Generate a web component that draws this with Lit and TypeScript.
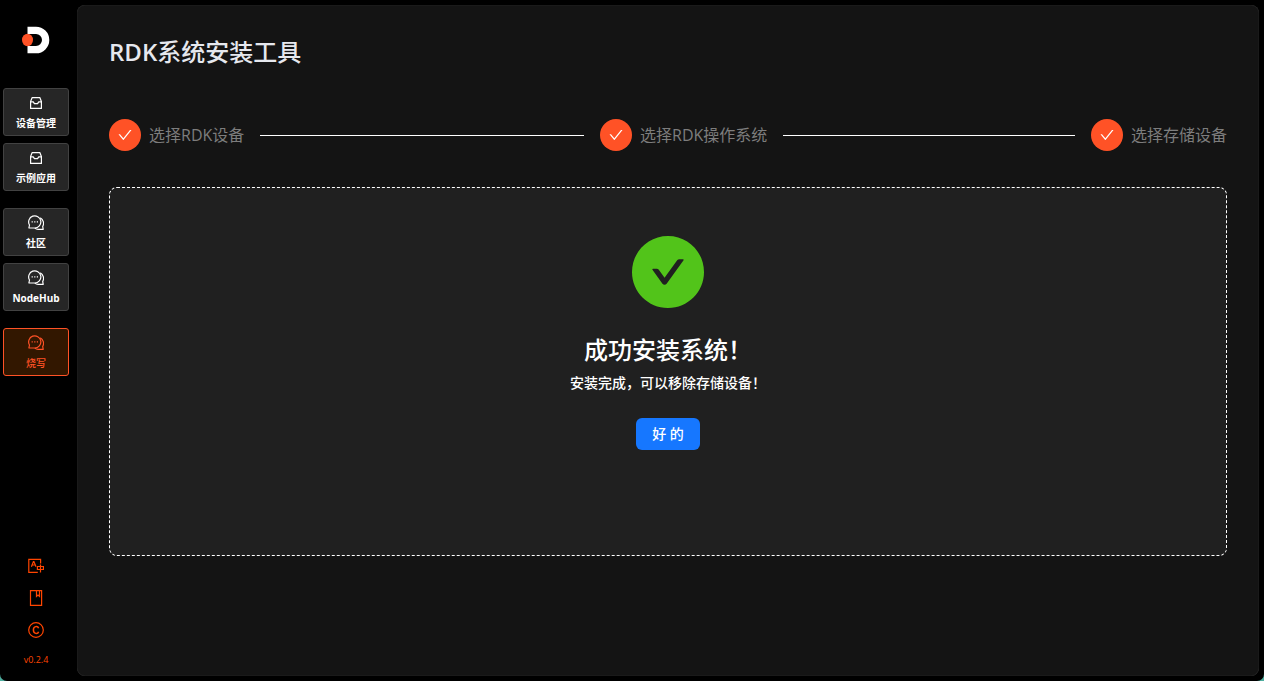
import { LitElement, html, css, svg, nothing } from "lit";
import { customElement } from "lit/decorators.js";
import { classMap } from "lit/directives/class-map.js";

const inboxIcon = html`<svg class="icon" viewBox="0 0 16 16" fill="none" stroke="currentColor" stroke-width="1.2" stroke-linejoin="round" aria-hidden="true">
  <path d="M2.6 6.4 L4.2 2.6 H11.8 L13.4 6.4 V13.4 H2.6 Z" />
  <path d="M2.6 6.9 H5.3 L6.4 8.6 H9.6 L10.7 6.9 H13.4" />
</svg>`;

const chatIcon = html`<svg class="icon" viewBox="0 0 16 16" fill="none" stroke="currentColor" stroke-width="1.2" stroke-linejoin="round" aria-hidden="true">
  <path d="M6.6 13 A6.1 6.1 0 1 0 1.5 10 L0.9 13 Z" />
  <path d="M12.2 2.9 A6.1 6.1 0 0 1 14.7 11.4 L15.2 14.4 H10.4 C9 14.5 7.8 14 6.8 13.1" />
  <path d="M3.6 6.9 h1.2 M6.2 6.9 h1.2 M8.8 6.9 h1.2" />
</svg>`;

const checkIcon = html`<svg class="check" viewBox="64 64 896 896" fill="currentColor" aria-hidden="true">
  <path d="M912 190h-69.9c-9.8 0-19.1 4.5-25.1 12.2L404.7 724.5 207 474a32 32 0 00-25.1-12.2H112c-6.7 0-10.4 7.7-6.3 12.9l273.9 347c12.8 16.2 37.4 16.2 50.3 0l488.4-618.9c4.1-5.1.4-12.8-6.3-12.8z" />
</svg>`;

const groups = [
  [
    { label: "设备管理", icon: inboxIcon, active: false },
    { label: "示例应用", icon: inboxIcon, active: false },
  ],
  [
    { label: "社区", icon: chatIcon, active: false },
    { label: "NodeHub", icon: chatIcon, active: false },
  ],
  [{ label: "烧写", icon: chatIcon, active: true }],
];

const tools = [
  {
    label: "切换语言",
    shape: svg`<path d="M12.6 5.4 V1.4 H0.8 V14.4 H9.8" /><path d="M3.4 8.8 L5.4 3.6 H5.9 L8 8.8 M4.2 7 H7.2" /><path d="M9.4 8.5 H15.4 V11.5 H9.4 Z M12.5 6.6 V14.6" />`,
  },
  {
    label: "文档",
    shape: svg`<path d="M2.5 0.6 H13.6 V15.4 H2.5 Z M8.5 0.6 V6.4 L10 5 L11.5 6.4 V0.6" />`,
  },
  {
    label: "版权",
    shape: svg`<circle cx="8" cy="8" r="7.3" /><path stroke-width="1.5" d="M10.6 6.3 C9.8 3.7 5.4 3.9 5.4 8 C5.4 12.1 9.8 12.3 10.6 9.7" />`,
  },
];

@customElement("app-sidebar")
export class AppSidebar extends LitElement {
  static styles = css`
    :host {
      display: flex;
      flex-direction: column;
      align-items: center;
      box-sizing: border-box;
      width: 72px;
      flex: none;
      padding: 26px 3px 14px;
    }
    .logo {
      display: block;
      width: 28px;
      height: 28px;
    }
    .menu {
      display: flex;
      flex-direction: column;
      gap: 17px;
      align-self: stretch;
      margin-top: 34px;
    }
    .group {
      display: flex;
      flex-direction: column;
      gap: 7px;
    }
    .item {
      display: flex;
      flex-direction: column;
      align-items: center;
      justify-content: center;
      gap: 4px;
      height: 48px;
      padding: 2px 0 0;
      border: 1px solid #424242;
      border-radius: 3px;
      background: #262626;
      color: #fff;
      font: 700 10px/16px var(--font);
      cursor: pointer;
    }
    .item.active {
      border-color: #ff5226;
      background: #321700;
      color: #ff5226;
      font-weight: 500;
    }
    .icon {
      display: block;
      width: 16px;
      height: 16px;
    }
    .tools {
      display: flex;
      flex-direction: column;
      gap: 16px;
      margin-top: auto;
    }
    .tool {
      display: block;
      padding: 0;
      border: 0;
      background: none;
      color: #ff4500;
      cursor: pointer;
    }
    .version {
      margin-top: 15px;
      color: #ff4500;
      font: 9px/14px var(--font);
    }
  `;

  render() {
    return html`
      <svg class="logo" viewBox="0 0 28 28" role="img" aria-label="D-Robotics">
        <path fill="#fff" d="M5.5 0.7 H14 A13.3 13.3 0 0 1 14 27.3 H5.5 V20 H14 A6 6 0 0 0 14 8 H5.5 Z" />
        <ellipse cx="5.5" cy="14" rx="5.5" ry="6.2" fill="#ff5226" />
      </svg>
      <nav class="menu">
        ${groups.map(
          (group) => html`<div class="group">
            ${group.map(
              (item) => html`<button
                type="button"
                class=${classMap({ item: true, active: item.active })}
                aria-current=${item.active ? "page" : nothing}
              >
                ${item.icon}<span>${item.label}</span>
              </button>`
            )}
          </div>`
        )}
      </nav>
      <div class="tools">
        ${tools.map(
          (tool) => html`<button type="button" class="tool" aria-label=${tool.label}>
            <svg class="icon" viewBox="0 0 16 16" fill="none" stroke="currentColor" stroke-width="1.2">${tool.shape}</svg>
          </button>`
        )}
      </div>
      <div class="version">v0.2.4</div>
    `;
  }
}

@customElement("app-root")
export class AppRoot extends LitElement {
  static styles = css`
    :host {
      --font: "Open Sans", "Noto Sans CJK SC", sans-serif;
      display: flex;
      gap: 5px;
      box-sizing: border-box;
      min-height: 100vh;
      padding-right: 5px;
      border-radius: 0 0 7px 7px;
      background: #000;
      box-shadow: 0 0 0 4px #4fae9f;
      font-family: var(--font);
    }
    .page {
      flex: 1;
      min-width: 0;
      display: flex;
      flex-direction: column;
      margin: 5px 0;
      padding: 28px 32px 120px;
      box-sizing: border-box;
      border-radius: 8px;
      background: #141414;
      box-shadow: inset 0 0 1px #555;
    }
    .title {
      margin: 0;
      color: #e6e8ee;
      font-size: 24px;
      line-height: 38px;
      font-weight: 500;
    }
    .brand {
      font-weight: 600;
    }
    .steps {
      display: flex;
      gap: 16px;
      margin: 48px 0 36px;
      padding: 0;
      list-style: none;
    }
    .step {
      display: flex;
      align-items: center;
      flex: 1;
      gap: 8px;
      color: #7d7d7d;
      font-size: 16px;
      line-height: 32px;
      white-space: nowrap;
    }
    .step:last-child {
      flex: none;
    }
    .step:not(:last-child)::after {
      content: "";
      flex: 1;
      height: 1px;
      margin-left: 8px;
      background: #fff;
    }
    .badge {
      display: grid;
      place-items: center;
      width: 32px;
      height: 32px;
      border-radius: 50%;
      background: #ff5226;
      color: #fff;
    }
    .check {
      width: 14px;
      height: 14px;
    }
    .result {
      flex: 1;
      display: flex;
      flex-direction: column;
      align-items: center;
      box-sizing: border-box;
      padding: 48px 32px;
      border: 1px dashed #fff;
      border-radius: 8px;
      background: #202020;
      color: #fff;
    }
    .done {
      display: block;
      width: 72px;
      height: 72px;
      color: #52c41a;
    }
    .heading {
      margin: 24px 0 4px;
      font-size: 24px;
      line-height: 36px;
      font-weight: 500;
    }
    .note {
      margin: 0 0 24px;
      font-size: 14px;
      line-height: 22px;
      font-weight: 500;
    }
    .ok {
      height: 32px;
      padding: 0 16px;
      border: 0;
      border-radius: 6px;
      background: #1677ff;
      color: #fff;
      font: 500 14px/22px var(--font);
      cursor: pointer;
    }
  `;

  private steps = ["选择RDK设备", "选择RDK操作系统", "选择存储设备"];

  render() {
    return html`
      <app-sidebar lang="zh-CN"></app-sidebar>
      <main class="page" lang="zh-CN">
        <h1 class="title"><span class="brand">RDK</span>系统安装工具</h1>
        <ol class="steps">
          ${this.steps.map(
            (step) => html`<li class="step"><span class="badge">${checkIcon}</span><span>${step}</span></li>`
          )}
        </ol>
        <section class="result">
          <svg class="done" viewBox="64 64 896 896" fill="currentColor" aria-hidden="true">
            <path d="M512 64C264.6 64 64 264.6 64 512s200.6 448 448 448 448-200.6 448-448S759.4 64 512 64zm193.5 301.7l-210.6 292a31.8 31.8 0 01-51.7 0L318.5 484.9c-3.8-5.3 0-12.7 6.5-12.7h46.9c10.2 0 19.9 4.9 25.9 13.3l71.2 98.8 157.2-218c6-8.3 15.6-13.3 25.9-13.3H699c6.5 0 10.3 7.4 6.5 12.7z" />
          </svg>
          <h2 class="heading">成功安装系统！</h2>
          <p class="note">安装完成，可以移除存储设备！</p>
          <button type="button" class="ok">好 的</button>
        </section>
      </main>
    `;
  }
}
